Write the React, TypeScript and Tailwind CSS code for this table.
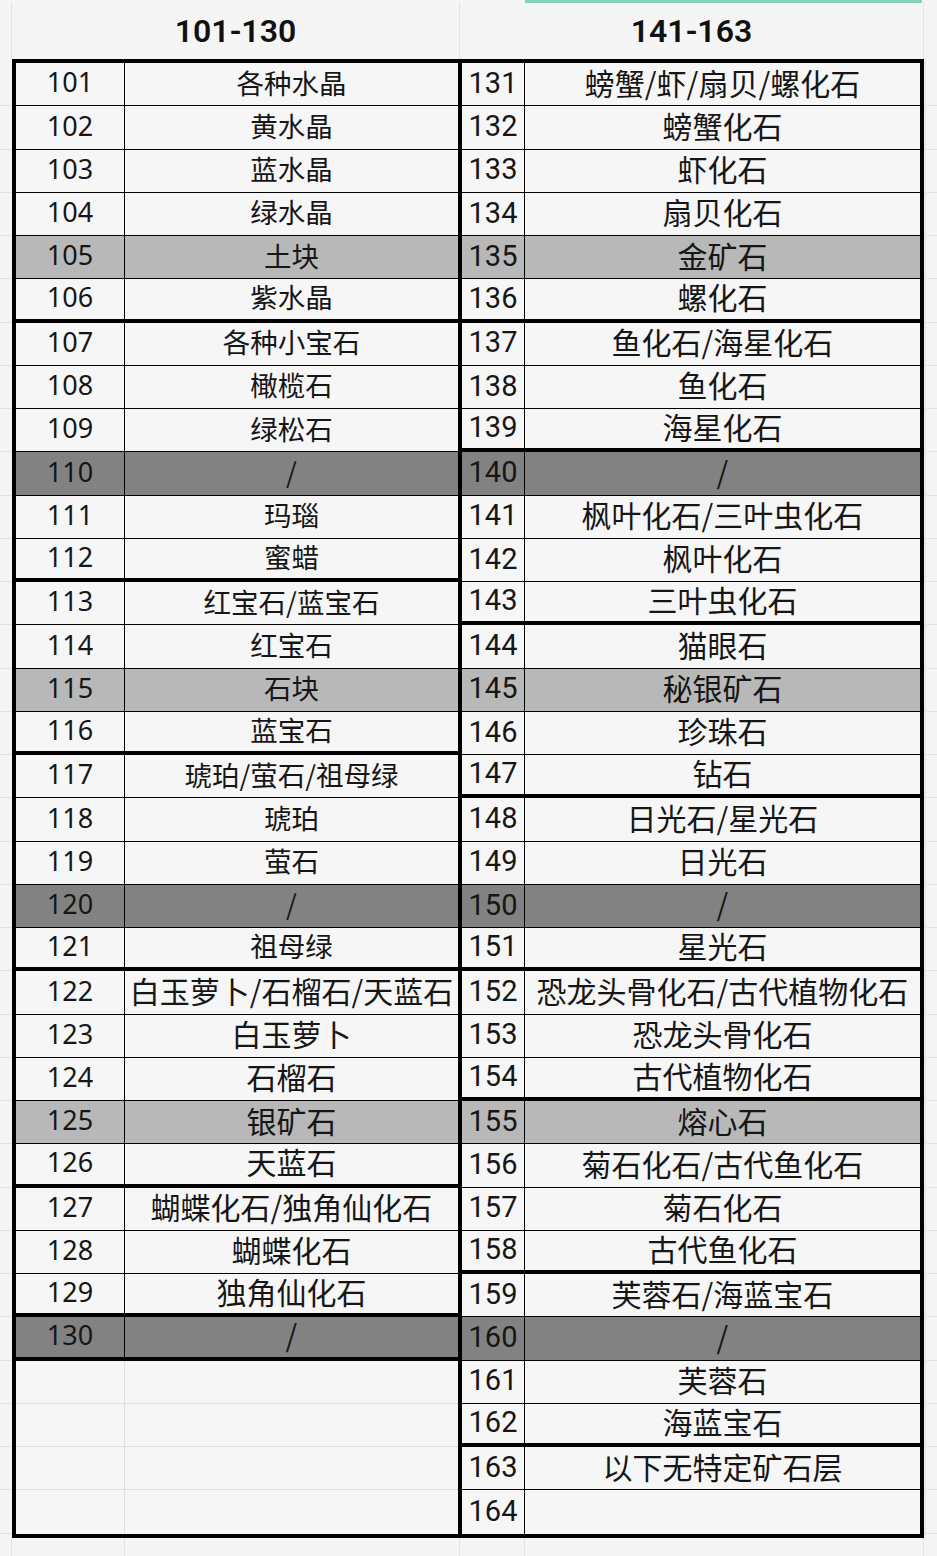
type Fill = "none" | "light" | "dark";
type Line = "thin" | "thick" | "none" | "faint";

interface Row {
  num: string;
  text: string;
  fill?: Fill;
  line?: Line;
  big?: boolean;
}

const left: Row[] = [
  { num: "101", text: "各种水晶" },
  { num: "102", text: "黄水晶" },
  { num: "103", text: "蓝水晶" },
  { num: "104", text: "绿水晶" },
  { num: "105", text: "土块", fill: "light" },
  { num: "106", text: "紫水晶", line: "thick" },
  { num: "107", text: "各种小宝石" },
  { num: "108", text: "橄榄石" },
  { num: "109", text: "绿松石" },
  { num: "110", text: "/", fill: "dark" },
  { num: "111", text: "玛瑙" },
  { num: "112", text: "蜜蜡", line: "thick" },
  { num: "113", text: "红宝石/蓝宝石" },
  { num: "114", text: "红宝石" },
  { num: "115", text: "石块", fill: "light" },
  { num: "116", text: "蓝宝石", line: "thick" },
  { num: "117", text: "琥珀/萤石/祖母绿" },
  { num: "118", text: "琥珀" },
  { num: "119", text: "萤石" },
  { num: "120", text: "/", fill: "dark" },
  { num: "121", text: "祖母绿", line: "thick" },
  { num: "122", text: "白玉萝卜/石榴石/天蓝石", big: true },
  { num: "123", text: "白玉萝卜", big: true },
  { num: "124", text: "石榴石", big: true },
  { num: "125", text: "银矿石", fill: "light", big: true },
  { num: "126", text: "天蓝石", line: "thick", big: true },
  { num: "127", text: "蝴蝶化石/独角仙化石", big: true },
  { num: "128", text: "蝴蝶化石", big: true },
  { num: "129", text: "独角仙化石", line: "thick", big: true },
  { num: "130", text: "/", fill: "dark", line: "thick", big: true },
  { num: "", text: "", line: "faint" },
  { num: "", text: "", line: "faint" },
  { num: "", text: "", line: "faint" },
  { num: "", text: "", line: "none" },
];

const right: Row[] = [
  { num: "131", text: "螃蟹/虾/扇贝/螺化石" },
  { num: "132", text: "螃蟹化石" },
  { num: "133", text: "虾化石" },
  { num: "134", text: "扇贝化石" },
  { num: "135", text: "金矿石", fill: "light" },
  { num: "136", text: "螺化石", line: "thick" },
  { num: "137", text: "鱼化石/海星化石" },
  { num: "138", text: "鱼化石" },
  { num: "139", text: "海星化石", line: "thick" },
  { num: "140", text: "/", fill: "dark" },
  { num: "141", text: "枫叶化石/三叶虫化石" },
  { num: "142", text: "枫叶化石" },
  { num: "143", text: "三叶虫化石", line: "thick" },
  { num: "144", text: "猫眼石" },
  { num: "145", text: "秘银矿石", fill: "light" },
  { num: "146", text: "珍珠石" },
  { num: "147", text: "钻石", line: "thick" },
  { num: "148", text: "日光石/星光石" },
  { num: "149", text: "日光石" },
  { num: "150", text: "/", fill: "dark" },
  { num: "151", text: "星光石", line: "thick" },
  { num: "152", text: "恐龙头骨化石/古代植物化石" },
  { num: "153", text: "恐龙头骨化石" },
  { num: "154", text: "古代植物化石", line: "thick" },
  { num: "155", text: "熔心石", fill: "light" },
  { num: "156", text: "菊石化石/古代鱼化石" },
  { num: "157", text: "菊石化石" },
  { num: "158", text: "古代鱼化石", line: "thick" },
  { num: "159", text: "芙蓉石/海蓝宝石" },
  { num: "160", text: "/", fill: "dark" },
  { num: "161", text: "芙蓉石" },
  { num: "162", text: "海蓝宝石", line: "thick" },
  { num: "163", text: "以下无特定矿石层" },
  { num: "164", text: "", line: "none" },
];

const cjk = "font-['Noto_Sans_CJK_SC','Noto_Sans',sans-serif]";

const fillClass = (f?: Fill) =>
  f === "light" ? "bg-[#b8b8b8]" : f === "dark" ? "bg-[#828282]" : "bg-[#f6f6f6]";

const lineClass = (l?: Line) => {
  switch (l) {
    case "thick":
      return "border-b-4 border-black";
    case "none":
      return "";
    case "faint":
      return "border-b border-[#dedede]";
    default:
      return "border-b border-black";
  }
};

function LeftRow({ row }: { row: Row }) {
  const empty = row.num === "";
  return (
    <div className={`flex h-[43.25px] shrink-0 ${fillClass(row.fill)} ${lineClass(row.line)}`}>
      <div
        className={`flex w-[109px] items-center justify-center border-r pb-[3px] text-[27px] text-[#161616] font-['Noto_Sans',sans-serif] ${
          empty ? "border-[#dedede]" : "border-black"
        }`}
      >
        {row.num}
      </div>
      <div
        className={`flex flex-1 items-center justify-center whitespace-nowrap pb-[4px] text-[#161616] ${cjk} ${
          row.big ? "text-[30px]" : "text-[27.5px]"
        }`}
      >
        {row.text}
      </div>
    </div>
  );
}

function RightRow({ row }: { row: Row }) {
  return (
    <div className={`flex h-[43.25px] shrink-0 ${fillClass(row.fill)} ${lineClass(row.line)}`}>
      <div className="flex w-[63px] items-center justify-center border-r border-black pb-[1px] text-[29px] text-[#161616] font-['Roboto',sans-serif]">
        {row.num}
      </div>
      <div className={`flex flex-1 items-center justify-center whitespace-nowrap pb-[4px] text-[30px] text-[#161616] ${cjk}`}>
        {row.text}
      </div>
    </div>
  );
}

function GridStrip({ width }: { width: string }) {
  return (
    <div className={`flex flex-col pt-[4px] ${width}`}>
      {Array.from({ length: 34 }).map((_, i) => (
        <div key={i} className="h-[43.25px] shrink-0 border-b border-[#e2e2e2]" />
      ))}
    </div>
  );
}

export default function App() {
  return (
    <div className="h-[1556px] w-[937px] overflow-hidden bg-[#f5f5f5]">
      {/* selection bar */}
      <div className="flex h-[3px]">
        <div className="w-[525px]" />
        <div className="w-[397px] bg-[#86d3b3]" />
      </div>

      {/* header */}
      <div className="flex h-[56px]">
        <div className="w-[12px] border-r border-[#e2e2e2]" />
        <div className="flex w-[448px] items-center justify-center border-r border-[#e2e2e2] pb-[1px] text-[32px] font-semibold text-[#111] font-['Roboto',sans-serif]">
          101-130
        </div>
        <div className="flex w-[464px] items-center justify-center border-r border-[#e2e2e2] pb-[1px] text-[32px] font-semibold text-[#111] font-['Roboto',sans-serif]">
          141-163
        </div>
        <div className="flex-1" />
      </div>

      {/* table */}
      <div className="flex">
        <GridStrip width="w-[12px]" />
        <div className="flex w-[912px] border-4 border-black">
          <div className="flex w-[442px] flex-col">
            {left.map((r, i) => (
              <LeftRow key={i} row={r} />
            ))}
          </div>
          <div className="w-[4px] bg-black" />
          <div className="flex flex-1 flex-col">
            {right.map((r, i) => (
              <RightRow key={i} row={r} />
            ))}
          </div>
        </div>
        <div className="ml-[1px] flex-1 border-l border-[#e2e2e2]">
          <GridStrip width="w-full" />
        </div>
      </div>

      {/* below table */}
      <div className="flex h-[20px]">
        <div className="w-[12px] border-r border-[#e2e2e2]" />
        <div className="w-[113px] border-r border-[#e2e2e2]" />
        <div className="w-[335px] border-r border-[#e2e2e2]" />
        <div className="w-[65px] border-r border-[#e2e2e2]" />
        <div className="w-[399px] border-r border-[#e2e2e2]" />
      </div>
    </div>
  );
}
